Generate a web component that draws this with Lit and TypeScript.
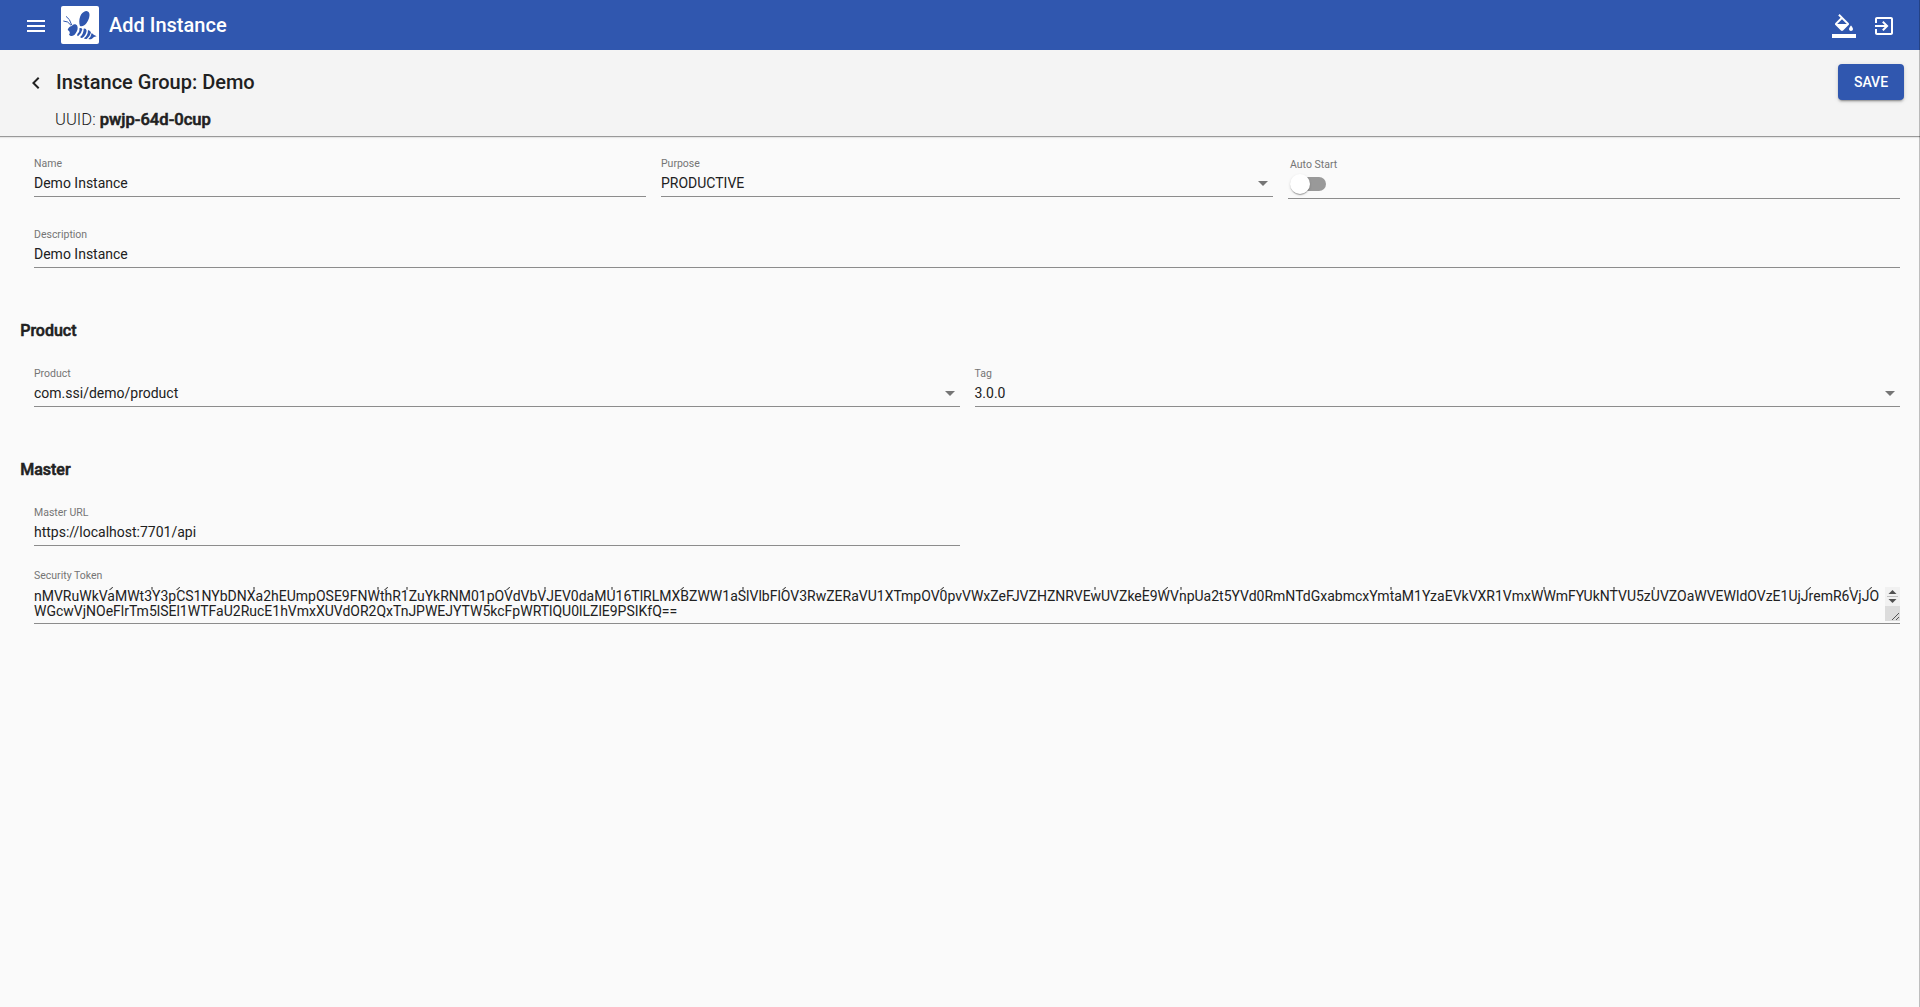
import { LitElement, html, css, svg } from "lit";
import { customElement, property } from "lit/decorators.js";

@customElement("form-field")
class FormField extends LitElement {
  @property() label = "";
  @property() value = "";
  @property({ type: Boolean }) select = false;

  static styles = css`
    :host { display: block; flex: 1 1 0; min-width: 0; }
    .field { height: 39px; border-bottom: 1px solid #8c8c8c; display: flex; flex-direction: column; }
    .label { font-size: 10.5px; line-height: 12px; color: #757575; margin-top: 1px; }
    .line { display: flex; align-items: center; justify-content: space-between; margin-top: 5px; height: 16px; padding-right: 4.8px; }
    .value { font-size: 14px; line-height: 16px; color: #212121; }
    .arrow { border: 5px solid transparent; border-top-color: #757575; border-bottom: 0; }
  `;

  render() {
    return html`<div class="field">
      <span class="label">${this.label}</span>
      <div class="line">
        <span class="value">${this.value}</span>
        ${this.select ? html`<i class="arrow"></i>` : ""}
      </div>
    </div>`;
  }
}

const TOKEN = [
  "nMVRuWkVaMWt3Y3pCS1NYbDNXa2hEUmpOSE9FNWthR1ZuYkRNM01pOVdVbVJEV0daMU16TlRLMXBZWW1aSlVlbFlOV3RwZERaVU1XTmpOV0pvVWxZeFJVZHZNRVEwUVZkeE9WVnpUa2t5YVd0RmNTdGxabmcxYmtaM1YzaEVkVXR1VmxWWmFYUkNTVU5zUVZOaWVEWldOVzE1UjJremR6VjJO",
  "WGcwVjNOeFlrTm5lSEl1WTFaU2RucE1hVmxXUVdOR2QxTnJPWEJYTW5kcFpWRTlQU0lLZlE9PSIKfQ==",
];

// Tails of the letters on the line scrolled out above: [x, slanted]
const TAILS: Array<[number, boolean]> = [
  [77, true], [118, false], [144, true], [220, false], [344, false], [352, true], [373, false],
  [474, true], [511, false], [578, false], [648, true], [709, false], [750, true], [908, true],
  [1061, false], [1110, false], [1132, true], [1147, false], [1357, false], [1510, false],
  [1580, false], [1620, false], [1775, true], [1816, false], [1836, true],
];

@customElement("app-root")
class AppRoot extends LitElement {
  static styles = css`
    :host { display: block; font-family: Roboto, sans-serif; color: #212121; }
    .page { box-sizing: border-box; height: 1007px; background: #fafafa; display: flex; flex-direction: column; position: relative; overflow: hidden; }
    .edge { position: absolute; right: 0; top: 0; width: 1px; height: 100%; background: rgba(0, 0, 0, 0.24); }
    .bar { height: 50px; flex: none; background: #3057af; color: #fff; display: flex; align-items: center; padding: 0 24px; box-sizing: border-box; }
    .menu { width: 24px; height: 24px; margin-top: 2px; fill: #fff; display: block; }
    .logo { width: 38px; height: 38px; margin-left: 13px; border-radius: 2px; background: #fff; display: block; }
    .title { font-size: 20px; font-weight: 500; line-height: 24px; margin-left: 10px; flex: 1; }
    .tools { display: flex; gap: 16px; }
    .head { height: 87px; flex: none; box-sizing: border-box; background: #f4f4f4; border-bottom: 1px solid #999; box-shadow: 0 1px 1px rgba(0, 0, 0, 0.08); padding: 14px 16px 0 24px; display: flex; align-items: flex-start; }
    .back { width: 24px; height: 24px; margin-top: 7px; fill: #212121; flex: none; }
    .names { flex: 1; margin-left: 8px; display: flex; flex-direction: column; }
    .group { font-size: 20px; font-weight: 500; line-height: 36px; }
    .uuid { font-size: 16.6px; font-weight: 300; line-height: 20px; margin: 10px 0 0 -1px; }
    .strong { font-weight: 500; -webkit-text-stroke: 0.55px #212121; }
    .save { width: 66px; height: 36px; border-radius: 4px; background: #3057af; color: #fff; font-size: 14px; font-weight: 500; line-height: 36px; text-align: center; box-shadow: 0 3px 1px -2px rgba(0, 0, 0, 0.2), 0 2px 2px rgba(0, 0, 0, 0.14), 0 1px 5px rgba(0, 0, 0, 0.12); }
    .form { padding: 20px 20px 0; display: flex; flex-direction: column; }
    .row { display: flex; gap: 15px; padding-left: 14px; }
    .description { margin-top: 29px; }
    .section { font-size: 16px; line-height: 20px; margin: 53px 0 26px 0.2px; }
    .blank { flex: 1 1 0; }
    .auto { flex: 1 1 0; height: 41px; border-bottom: 1px solid #8c8c8c; }
    .label { display: block; font-size: 10.5px; line-height: 12px; color: #757575; }
    .auto .label { padding: 2px 0 0 2px; }
    .toggle { display: flex; align-items: center; width: 36px; height: 20px; margin: 3px 0 0 2px; }
    .thumb { width: 20px; height: 20px; border-radius: 50%; background: #fff; box-shadow: 0 2px 1px -1px rgba(0, 0, 0, 0.2), 0 1px 1px rgba(0, 0, 0, 0.14), 0 1px 3px rgba(0, 0, 0, 0.12); z-index: 1; }
    .track { width: 28px; height: 14px; border-radius: 7px; background: #999; margin-left: -12px; }
    .token { margin: 24px 0 0 14px; height: 53px; border-bottom: 1px solid #8c8c8c; position: relative; }
    .area { display: flex; justify-content: space-between; margin-top: 5px; height: 34px; }
    .lines { font-size: 14px; line-height: 15px; padding-top: 2px; white-space: nowrap; }
    .text { display: block; }
    .tails { position: absolute; left: -34px; top: 17px; width: 1900px; height: 4px; stroke: #212121; fill: none; }
    .scroller { width: 15px; height: 34px; flex: none; }
  `;

  render() {
    return html`<div class="page">
      <header class="bar">
        <svg class="menu" viewBox="0 0 24 24"><path d="M3 18h18v-2H3v2zm0-5h18v-2H3v2zm0-7v2h18V6H3z" /></svg>
        <svg class="logo" viewBox="0 0 114 114" fill="#3057af">
          <path d="M57 60C51 42 58 18 75 15C92 14 86 41 75 53C70 59 64 62 57 60Z" />
          <path d="M20 72C22 63 28 61 33 60C34 54 44 52 48 58C52 65 50 75 44 82C39 91 29 92 24 86C28 81 27 76 20 72Z" />
          <path d="M7 45Q21 44 31 59M15 31Q27 38 32 57" fill="none" stroke="#3057af" stroke-width="3" />
          <path d="M55 67Q61 64 64 70Q62 82 51 91Q47 89 49 84Q57 78 55 67Z" />
          <path d="M68 68Q75 66 77 74Q75 88 63 96Q57 96 58 92Q68 84 68 68Z" />
          <path d="M81 72Q89 74 90 80Q86 92 77 99Q70 100 69 97Q81 88 81 72Z" />
          <path d="M92 81Q97 87 107 91Q98 92 93 98Q88 101 82 99Q90 93 92 81Z" />
        </svg>
        <span class="title">Add Instance</span>
        <div class="tools">
          <svg class="menu" viewBox="0 0 24 24"><path d="M16.56 8.94L7.62 0 6.21 1.41l2.38 2.38-5.15 5.15c-.59.59-.59 1.54 0 2.12l5.5 5.5c.29.29.68.44 1.06.44s.77-.15 1.06-.44l5.5-5.5c.59-.58.59-1.53 0-2.12zM5.21 10L10 5.21 14.79 10H5.21zM19 11.5s-2 2.17-2 3.5c0 1.1.9 2 2 2s2-.9 2-2c0-1.33-2-3.5-2-3.5zM0 20h24v4H0z" /></svg>
          <svg class="menu" viewBox="0 0 24 24"><path d="M10.09 15.59L11.5 17l5-5-5-5-1.41 1.41L12.67 11H3v2h9.67l-2.58 2.59zM19 3H5c-1.11 0-2 .9-2 2v4h2V5h14v14H5v-4H3v4c0 1.1.89 2 2 2h14c1.1 0 2-.9 2-2V5c0-1.1-.9-2-2-2z" /></svg>
        </div>
      </header>
      <section class="head">
        <svg class="back" viewBox="0 0 24 24"><path d="M15.41 7.41L14 6l-6 6 6 6 1.41-1.41L10.83 12z" /></svg>
        <div class="names">
          <span class="group">Instance Group: Demo</span>
          <span class="uuid">UUID: <span class="strong">pwjp-64d-0cup</span></span>
        </div>
        <div class="save">SAVE</div>
      </section>
      <main class="form">
        <div class="row">
          <form-field label="Name" value="Demo Instance"></form-field>
          <form-field label="Purpose" value="PRODUCTIVE" select></form-field>
          <div class="auto">
            <span class="label">Auto Start</span>
            <div class="toggle"><i class="thumb"></i><i class="track"></i></div>
          </div>
        </div>
        <div class="row description"><form-field label="Description" value="Demo Instance"></form-field></div>
        <div class="section strong">Product</div>
        <div class="row">
          <form-field label="Product" value="com.ssi/demo/product" select></form-field>
          <form-field label="Tag" value="3.0.0" select></form-field>
        </div>
        <div class="section strong">Master</div>
        <div class="row">
          <form-field label="Master URL" value="https://localhost:7701/api"></form-field>
          <div class="blank"></div>
        </div>
        <div class="token">
          <span class="label">Security Token</span>
          <div class="area">
            <div class="lines">${TOKEN.map((t) => html`<span class="text">${t}</span>`)}</div>
            <svg class="scroller" viewBox="0 0 15 34">
              <path d="M0 0h15v19H0z" fill="#f1f1f1" /><path d="M0 19h15v15H0z" fill="#dcdcdc" />
              <path d="M3.5 7L7.5 3L11.5 7zM3.5 12L7.5 16L11.5 12z" fill="#505050" />
              <path d="M2 9.5h11" stroke="#c1c1c1" />
              <path d="M7 33L14 26M11 33L14 30" stroke="#555" stroke-width="1" fill="none" />
            </svg>
          </div>
          <svg class="tails" viewBox="0 0 1900 4">
            ${TAILS.map(([x, slant]) => svg`<path d=${slant ? `M${x + 35.5} 0q-.3 2-3 2.6` : `M${x + 34} 0v2.8`} />`)}
          </svg>
        </div>
      </main>
      <i class="edge"></i>
    </div>`;
  }
}
